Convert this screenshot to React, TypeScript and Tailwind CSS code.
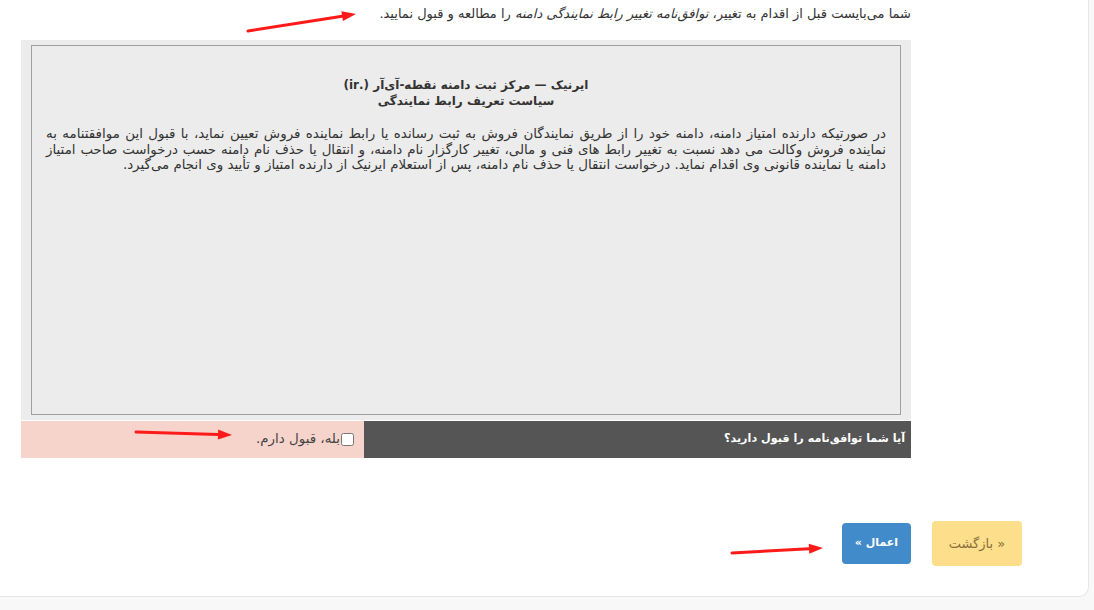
import React from 'react'

const font = { fontFamily: '"DejaVu Sans", Tahoma, sans-serif' }

function Arrow({ x1, y1, x2, y2 }: { x1: number; y1: number; x2: number; y2: number }) {
  const a = Math.atan2(y2 - y1, x2 - x1)
  const len = 14
  const w = 5
  const bx = x2 - Math.cos(a) * len
  const by = y2 - Math.sin(a) * len
  const px = -Math.sin(a) * w
  const py = Math.cos(a) * w
  return (
    <g>
      <line x1={x1} y1={y1} x2={bx} y2={by} stroke="#ff1a1a" strokeWidth={3} strokeLinecap="round" />
      <polygon points={`${x2},${y2} ${bx + px},${by + py} ${bx - px},${by - py}`} fill="#ff1a1a" />
    </g>
  )
}

export default function App() {
  return (
    <div className="relative min-h-screen bg-[#f8f8f8]" style={font}>
      {/* Card */}
      <div className="w-[1089px] h-[597px] bg-white border-r border-b border-[#e6e6e6] rounded-br-[10px]">
        <div dir="rtl" className="w-[890px] ml-[21px] pt-[6px]">
          <p className="text-[13px] leading-[16px] text-[#333] h-[34px]">
            شما می‌بایست قبل از اقدام به تغییر، <i>توافق‌نامه تغییر رابط نمایندگی دامنه</i> را مطالعه و قبول نمایید.
          </p>

          <div className="bg-[#ececec] px-[10px] py-[5px]">
            <div className="h-[370px] border border-[#a0a0a0] px-[14px] pt-[31px] text-[#333]">
              <div className="text-center font-bold text-[12px] leading-[16px]">
                <div>ایرنیک — مرکز ثبت دامنه نقطه-آی‌آر (.ir)</div>
                <div>سیاست تعریف رابط نمایندگی</div>
              </div>
              <div className="mt-[17px] text-[13.4px] leading-[15.5px]">
                <div className="text-justify [text-align-last:justify] whitespace-nowrap">
                  در صورتیکه دارنده امتیاز دامنه، دامنه خود را از طریق نمایندگان فروش به ثبت رسانده یا رابط نماینده فروش تعیین نماید، با قبول این موافقتنامه به
                </div>
                <div className="text-justify [text-align-last:justify] whitespace-nowrap">
                  نماینده فروش وکالت می دهد نسبت به تغییر رابط های فنی و مالی، تغییر کارگزار نام دامنه، و انتقال یا حذف نام دامنه حسب درخواست صاحب امتیاز
                </div>
                <div className="whitespace-nowrap">
                  دامنه یا نماینده قانونی وی اقدام نماید. درخواست انتقال یا حذف نام دامنه، پس از استعلام ایرنیک از دارنده امتیاز و تأیید وی انجام می‌گیرد.
                </div>
              </div>
            </div>
          </div>

          <div className="mt-px flex h-[37px]">
            <div className="w-[547px] bg-[#555555] text-white font-bold text-[11.2px] flex items-center pr-[6px]">
              آیا شما توافق‌نامه را قبول دارید؟
            </div>
            <label className="flex-1 bg-[#f6d4cb] text-[#444] text-[13.4px] flex items-center pr-[10px]">
              <input type="checkbox" className="w-[13px] h-[13px] m-0 ml-px" />
              بله، قبول دارم.
            </label>
          </div>
        </div>

        <div className="flex justify-end items-center gap-[21px] pr-[66px] mt-[63px]">
          <button dir="rtl" className="w-[69px] h-[41px] rounded-[4px] bg-[#428bca] text-white font-bold text-[11px]">
            اعمال »
          </button>
          <button dir="rtl" className="w-[90px] h-[45px] rounded-[4px] bg-[#fddf8b] text-[#8a6d3b] text-[13px]">
            « بازگشت
          </button>
        </div>
      </div>

      {/* annotation arrows */}
      <svg className="absolute left-0 top-0 pointer-events-none" width={1094} height={610}>
        <Arrow x1={248} y1={31} x2={356} y2={14} />
        <Arrow x1={136} y1={432} x2={232} y2={435} />
        <Arrow x1={732} y1={553} x2={823} y2={548} />
      </svg>
    </div>
  )
}
